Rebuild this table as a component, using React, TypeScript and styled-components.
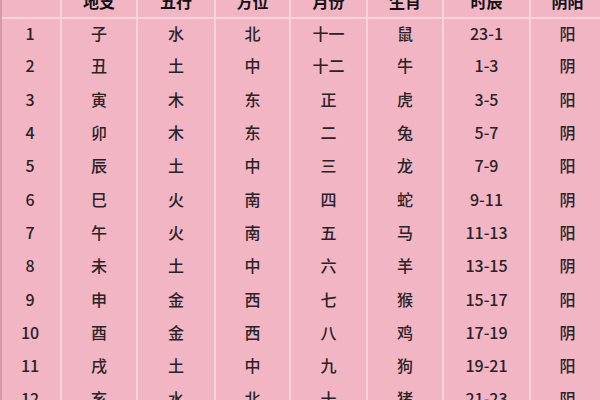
import React from 'react';
import styled, { createGlobalStyle } from 'styled-components';

const GlobalStyle = createGlobalStyle`
  html, body {
    margin: 0;
    padding: 0;
    background: #f1b5c4;
  }
`;

const Viewport = styled.div`
  width: 600px;
  height: 400px;
  overflow: hidden;
  background: #f1b5c4;
  border-left: 2px solid #d89aab;
  box-sizing: border-box;
`;

const Table = styled.table`
  border-collapse: collapse;
  table-layout: fixed;
  width: 604px;
  margin-top: -17px;
  margin-left: -2px;
  font-family: "Noto Sans CJK SC", "Noto Sans", sans-serif;
`;

const HeadCell = styled.th<{ last?: boolean }>`
  height: 35px;
  padding: 2px 0 0;
  box-sizing: border-box;
  font-size: 16px;
  font-weight: 700;
  color: #111;
  text-align: center;
  border-bottom: 2px solid #f8d3dc;
  border-right: ${p => (p.last ? 'none' : '2px solid #f8d3dc')};
`;

const Cell = styled.td<{ last?: boolean }>`
  height: 33.3px;
  box-sizing: border-box;
  padding: 0 0 5px;
  font-size: 16px;
  font-weight: 500;
  color: #2a2326;
  text-align: center;
  line-height: 1;
  border-right: ${p => (p.last ? 'none' : '2px solid #f8d3dc')};
`;

const widths = [61, 76, 78, 75, 77, 76, 87, 74];
const headers = ['', '地支', '五行', '方位', '月份', '生肖', '时辰', '阴阳'];

const rows: string[][] = [
  ['1', '子', '水', '北', '十一', '鼠', '23-1', '阳'],
  ['2', '丑', '土', '中', '十二', '牛', '1-3', '阴'],
  ['3', '寅', '木', '东', '正', '虎', '3-5', '阳'],
  ['4', '卯', '木', '东', '二', '兔', '5-7', '阴'],
  ['5', '辰', '土', '中', '三', '龙', '7-9', '阳'],
  ['6', '巳', '火', '南', '四', '蛇', '9-11', '阴'],
  ['7', '午', '火', '南', '五', '马', '11-13', '阳'],
  ['8', '未', '土', '中', '六', '羊', '13-15', '阴'],
  ['9', '申', '金', '西', '七', '猴', '15-17', '阳'],
  ['10', '酉', '金', '西', '八', '鸡', '17-19', '阴'],
  ['11', '戌', '土', '中', '九', '狗', '19-21', '阳'],
  ['12', '亥', '水', '北', '十', '猪', '21-23', '阴'],
];

export default function App() {
  return (
    <>
      <GlobalStyle />
      <Viewport>
        <Table>
          <colgroup>
            {widths.map((w, i) => (
              <col key={i} style={{ width: w }} />
            ))}
          </colgroup>
          <thead>
            <tr>
              {headers.map((h, i) => (
                <HeadCell key={i} last={i === headers.length - 1}>
                  {h}
                </HeadCell>
              ))}
            </tr>
          </thead>
          <tbody>
            {rows.map((r, ri) => (
              <tr key={ri}>
                {r.map((c, ci) => (
                  <Cell key={ci} last={ci === r.length - 1}>
                    {c}
                  </Cell>
                ))}
              </tr>
            ))}
          </tbody>
        </Table>
      </Viewport>
    </>
  );
}
